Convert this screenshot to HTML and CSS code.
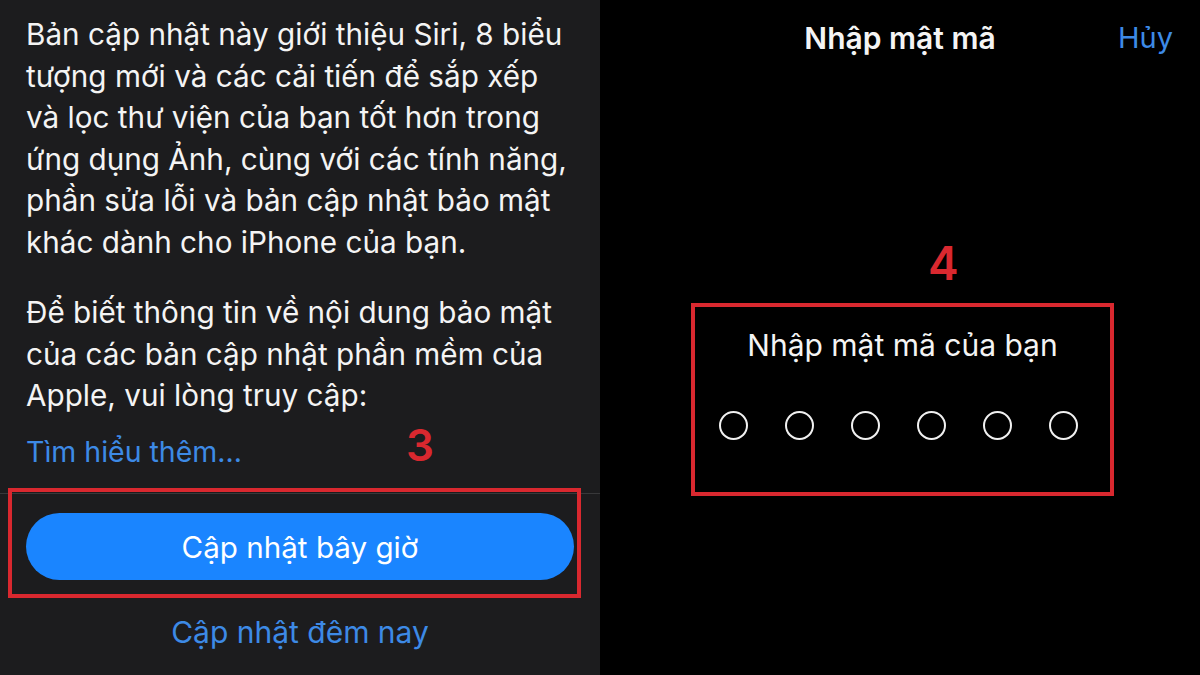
FILE: index.html
```html
<!DOCTYPE html>
<html lang="vi">
<head>
    <meta charset="UTF-8">
    <title>Cập nhật phần mềm</title>
    <link rel="stylesheet" href="styles.css">
</head>
<body>
    <div class="screen">
        <!-- màn hình cập nhật phần mềm -->
        <section class="update-pane">
            <div class="notes">
                <p>Bản cập nhật này giới thiệu Siri, 8 biểu tượng mới và các cải tiến để sắp xếp và lọc thư viện của bạn tốt hơn trong ứng dụng Ảnh, cùng với các tính năng, phần sửa lỗi và bản cập nhật bảo mật khác dành cho iPhone của bạn.</p>
                <p>Để biết thông tin về nội dung bảo mật của các bản cập nhật phần mềm của Apple, vui lòng truy cập:</p>
                <div class="more-row">
                    <a class="link" href="#">Tìm hiểu thêm...</a>
                    <span class="step step-3">3</span>
                </div>
            </div>
            <div class="actions">
                <div class="highlight now-box">
                    <button class="primary">Cập nhật bây giờ</button>
                </div>
                <a class="link later" href="#">Cập nhật đêm nay</a>
            </div>
        </section>

        <!-- màn hình nhập mật mã -->
        <section class="passcode-pane">
            <header class="nav">
                <span class="title">Nhập mật mã</span>
                <a class="link cancel" href="#">Hủy</a>
            </header>
            <div class="step step-4">4</div>
            <div class="highlight passcode-box">
                <p class="prompt">Nhập mật mã của bạn</p>
                <div class="dots">
                    <span class="dot"></span>
                    <span class="dot"></span>
                    <span class="dot"></span>
                    <span class="dot"></span>
                    <span class="dot"></span>
                    <span class="dot"></span>
                </div>
            </div>
        </section>
    </div>
</body>
</html>
```

FILE: styles.css
```css
* {
    box-sizing: border-box;
}

body {
    margin: 0;
    background: #000;
    font-family: Inter, "Noto Sans", sans-serif;
    color: #f4f4f4;
}

.screen {
    width: 1200px;
    height: 675px;
    display: flex;
    overflow: hidden;
}

.link {
    color: #3d8ae6;
    text-decoration: none;
}

.step {
    color: #d9282f;
    font-weight: 600;
    line-height: 1;
}

.highlight {
    border: 4px solid #d9282f;
}

/* bên trái */
.update-pane {
    width: 600px;
    background: #1c1c1e;
    display: flex;
    flex-direction: column;
}

.notes {
    padding: 14px 30px 0 26px;
    font-size: 29.7px;
    line-height: 41.5px;
    height: 493px;
}

.notes p {
    margin: 0 0 29px;
}

.more-row {
    display: flex;
    align-items: center;
    margin-top: -23px;
}

.more-row .link {
    font-size: 28.5px;
}

.step-3 {
    font-size: 44px;
    margin: 0 0 14px 164px;
}

.actions {
    border-top: 1px solid #38383a;
    display: flex;
    flex-direction: column;
    align-items: center;
}

.now-box {
    align-self: flex-start;
    width: 573px;
    margin: -6px 0 0 8px;
    padding: 21px 3px 14px 14px;
}

.primary {
    display: block;
    width: 548px;
    height: 67px;
    border: none;
    border-radius: 34px;
    background: #1a85ff;
    color: #fff;
    font-family: inherit;
    font-size: 29.6px;
}

.later {
    margin-top: 16px;
    font-size: 30px;
}

/* bên phải */
.passcode-pane {
    width: 600px;
    display: flex;
    flex-direction: column;
}

.nav {
    display: flex;
    justify-content: center;
    position: relative;
    padding-top: 20px;
    font-size: 30px;
}

.title {
    font-weight: 600;
}

.cancel {
    position: absolute;
    right: 27px;
    top: 20px;
    font-size: 29px;
}

.step-4 {
    font-size: 46px;
    margin: 184px 0 0 328px;
}

.passcode-box {
    width: 423px;
    height: 193px;
    margin: 17px 0 0 91px;
    display: flex;
    flex-direction: column;
    align-items: center;
}

.prompt {
    margin: 20px 0 0;
    font-size: 30px;
}

.dots {
    display: flex;
    gap: 37px;
    margin-top: 48px;
    margin-left: -8px;
}

.dot {
    width: 29px;
    height: 29px;
    border: 2px solid #f0f0f0;
    border-radius: 50%;
}
```
